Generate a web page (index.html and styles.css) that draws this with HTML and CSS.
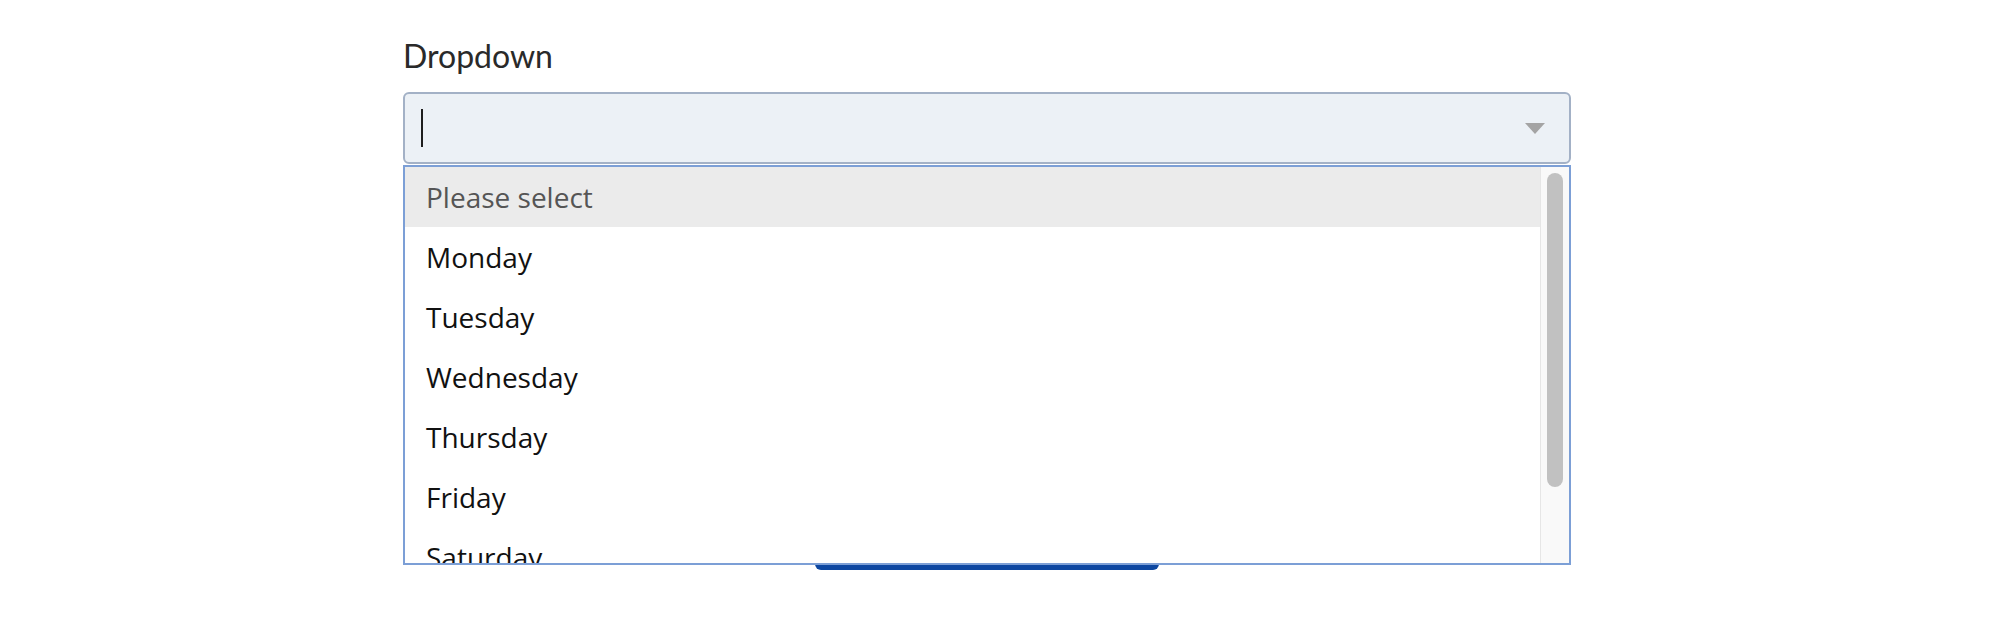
FILE: index.html
```html
<!DOCTYPE html>
<html lang="en">
<head>
<meta charset="utf-8">
<title>Dropdown</title>
<link rel="stylesheet" href="styles.css">
</head>
<body>
<main class="page">
  <form class="form">
    <div class="field">
      <label class="label" for="dd">Dropdown</label>
      <div class="select-wrap">
        <div class="select" id="dd">
          <span class="caret"></span>
          <span class="arrow"></span>
        </div>
        <div class="listbox">
          <ul class="options">
            <li class="option placeholder">Please select</li>
            <li class="option">Monday</li>
            <li class="option">Tuesday</li>
            <li class="option">Wednesday</li>
            <li class="option">Thursday</li>
            <li class="option">Friday</li>
            <li class="option">Saturday</li>
            <li class="option">Sunday</li>
          </ul>
          <div class="track"><div class="thumb"></div></div>
        </div>
      </div>
    </div>
    <div class="actions">
      <button type="button" class="submit">Submit</button>
    </div>
  </form>
</main>
</body>
</html>
```

FILE: styles.css
```css
* { box-sizing: border-box; }
html, body { margin: 0; padding: 0; background: #ffffff; }
body { font-family: "Open Sans", "Noto Sans", sans-serif; }

.page {
  padding: 36px 0 0 403px;
}
.form {
  width: 1168px;
  display: flex;
  flex-direction: column;
}
.field {
  display: flex;
  flex-direction: column;
}
.label {
  font-family: Lato, "Liberation Sans", sans-serif;
  font-size: 32px;
  line-height: 40px;
  color: #2a2a2a;
  margin-bottom: 16px;
}
.select-wrap {
  position: relative;
}
.select {
  height: 72px;
  border: 2px solid #a3b1c6;
  border-radius: 6px;
  background: #ecf1f6;
  display: flex;
  align-items: center;
  justify-content: space-between;
  padding: 0 24px 0 16px;
}
.caret {
  width: 2px;
  height: 38px;
  background: #1e1e1e;
}
.arrow {
  width: 0;
  height: 0;
  border-left: 10px solid transparent;
  border-right: 10px solid transparent;
  border-top: 11px solid #a4a4a4;
  margin-top: 1px;
}
.listbox {
  position: absolute;
  top: calc(100% + 1px);
  left: 0;
  right: 0;
  height: 400px;
  border: 2px solid #7c9fd6;
  background: #ffffff;
  display: flex;
  overflow: hidden;
  z-index: 2;
}
.options {
  list-style: none;
  margin: 0;
  padding: 0;
  flex: 1;
  overflow: hidden;
}
.option {
  height: 60px;
  line-height: 60px;
  padding-left: 21px;
  font-size: 28px;
  color: #111111;
  white-space: nowrap;
}
.option.placeholder {
  background: #ebebeb;
  color: #555555;
}
.track {
  width: 29px;
  border-left: 1px solid #e6e6e6;
  background: #f9f9f9;
  padding: 6px 0 0 6px;
}
.thumb {
  width: 16px;
  height: 314px;
  border-radius: 8px;
  background: #c1c1c1;
}
.actions {
  display: flex;
  justify-content: center;
  margin-top: 346px;
}
.submit {
  width: 344px;
  height: 60px;
  border: none;
  border-radius: 6px;
  background: #0d47a1;
  color: #ffffff;
  font-family: "Open Sans", sans-serif;
  font-size: 24px;
}
```
